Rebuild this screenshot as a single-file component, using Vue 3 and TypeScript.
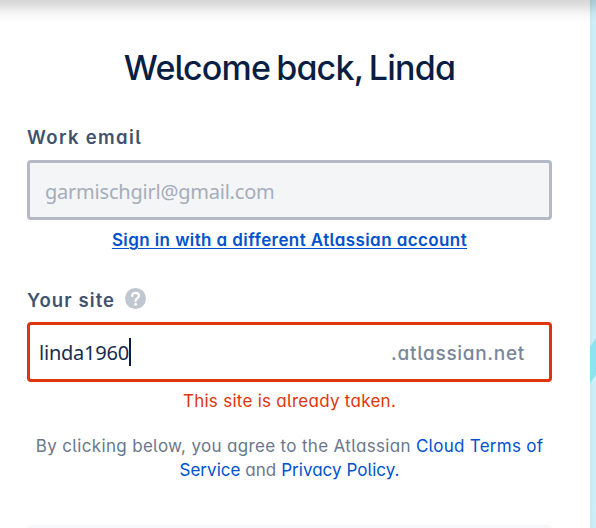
<script setup lang="ts">
import { ref } from 'vue'

const email = ref('garmischgirl@gmail.com')
const site = ref('linda1960')
</script>

<template>
  <div class="page">
    <main class="card">
      <h1><span class="title">Welcome back, Linda</span></h1>
      <label class="label work-label"><span class="work">Work email</span></label>
      <div class="field disabled"><span class="email">{{ email }}</span></div>
      <p class="switch"><a>Sign in with a different Atlassian account</a></p>
      <label class="label site-label">
        <span class="your">Your site</span>
        <svg class="help" viewBox="0 0 21 21" width="21" height="21">
          <circle cx="10.5" cy="10.5" r="10.5" fill="#c1c7d0" />
          <path d="M7.2 8.1C7.2 6.1 8.6 4.8 10.6 4.8s3.4 1.2 3.4 2.9c0 2.5-3.4 2.5-3.4 5.2" fill="none" stroke="#fff" stroke-width="2.2" stroke-linecap="round" />
          <circle cx="10.6" cy="16.3" r="1.5" fill="#fff" />
        </svg>
      </label>
      <div class="field invalid">
        <span class="site">{{ site }}</span><i class="caret"></i>
        <span class="suffix">.atlassian.net</span>
      </div>
      <p class="error"><span>This site is already taken.</span></p>
      <p class="terms">
        <span class="line first">By clicking below, you agree to the Atlassian <a>Cloud Terms of</a></span>
        <span class="line second"><a>Service</a> and <a>Privacy Policy.</a></span>
      </p>
      <div class="submit"></div>
    </main>
    <aside class="backdrop">
      <svg width="6" height="528" viewBox="0 0 6 528">
        <path d="M0 347L6 338V375L0 383Z" fill="#8ce4f2" />
      </svg>
    </aside>
    <div class="shade"></div>
  </div>
</template>

<style>
body { overflow: hidden; }
</style>

<style scoped>
.page {
  position: relative;
  display: flex;
  width: 596px;
  height: 528px;
  overflow: hidden;
  background: #fff;
  font-family: Inter, "Open Sans", sans-serif;
  font-feature-settings: "cv11" 1, "cv05" 1;
}
.card {
  box-sizing: border-box;
  display: flex;
  flex-direction: column;
  width: 590px;
  height: 528px;
  padding: 48px 38px 0 27px;
}
.backdrop { width: 6px; background: linear-gradient(90deg, #c3e8f3, #caeffa 50%, #d0f0f9); }
.backdrop svg { display: block; }
.shade {
  position: absolute;
  inset: 0 0 auto;
  height: 22px;
  background: linear-gradient(rgba(0, 0, 0, .16), rgba(0, 0, 0, .13) 20%, rgba(0, 0, 0, .04) 60%, transparent);
}
h1, p { margin: 0; text-align: center; white-space: nowrap; }
h1 { height: 40px; font-size: 34px; line-height: 40px; font-weight: 500; color: #091e42; letter-spacing: -.8px; word-spacing: -2.2px; }
.label {
  display: flex;
  align-items: center;
  flex: none;
  height: 24px;
  font-size: 18.5px;
  line-height: 24px;
  font-weight: 600;
  color: #42526e;
  letter-spacing: 1.1px;
}
.work-label { margin-top: 37px; letter-spacing: 1.35px; }
.field {
  box-sizing: border-box;
  display: flex;
  align-items: center;
  flex: none;
  height: 60px;
  margin-top: 11px;
  border: 3px solid #b3bac5;
  border-radius: 4px;
  font-family: "Noto Sans", sans-serif;
  font-size: 20px;
  line-height: 28px;
  letter-spacing: -.22px;
}
.disabled { padding: 3px 15px 0; background: #f4f5f7; color: #a5adba; }
.switch { height: 24px; margin-top: 8px; font-size: 17px; line-height: 24px; font-weight: 600; letter-spacing: .41px; }
.switch a { color: #0052cc; text-decoration: underline; text-decoration-thickness: 1px; text-underline-offset: 2px; }
.site-label { gap: 10px; margin-top: 36px; }
.help { flex: none; margin-top: -3px; }
.invalid { margin-top: 10px; padding: 0 24px 0 9px; border-color: #de350b; color: #172b4d; }
.site { padding-top: 2px; }
.caret { width: 2px; height: 28px; background: #091e42; }
.suffix { margin-left: auto; padding-top: 3px; font-family: Inter, sans-serif; font-size: 19px; font-weight: 500; color: #7a869a; letter-spacing: .7px; }
.error { height: 24px; margin-top: 7px; font-size: 17px; line-height: 24px; color: #de350b; letter-spacing: .27px; }
.terms { height: 48px; margin-top: 21px; font-size: 17px; line-height: 24px; color: #6b778c; }
.terms a { color: #0052cc; }
.line { display: block; }
.first { letter-spacing: .33px; }
.first a { letter-spacing: .26px; }
.second { letter-spacing: .04px; }
.submit { height: 40px; flex: none; margin-top: 43px; border-radius: 4px; background: #f7f8f9; }
</style>
